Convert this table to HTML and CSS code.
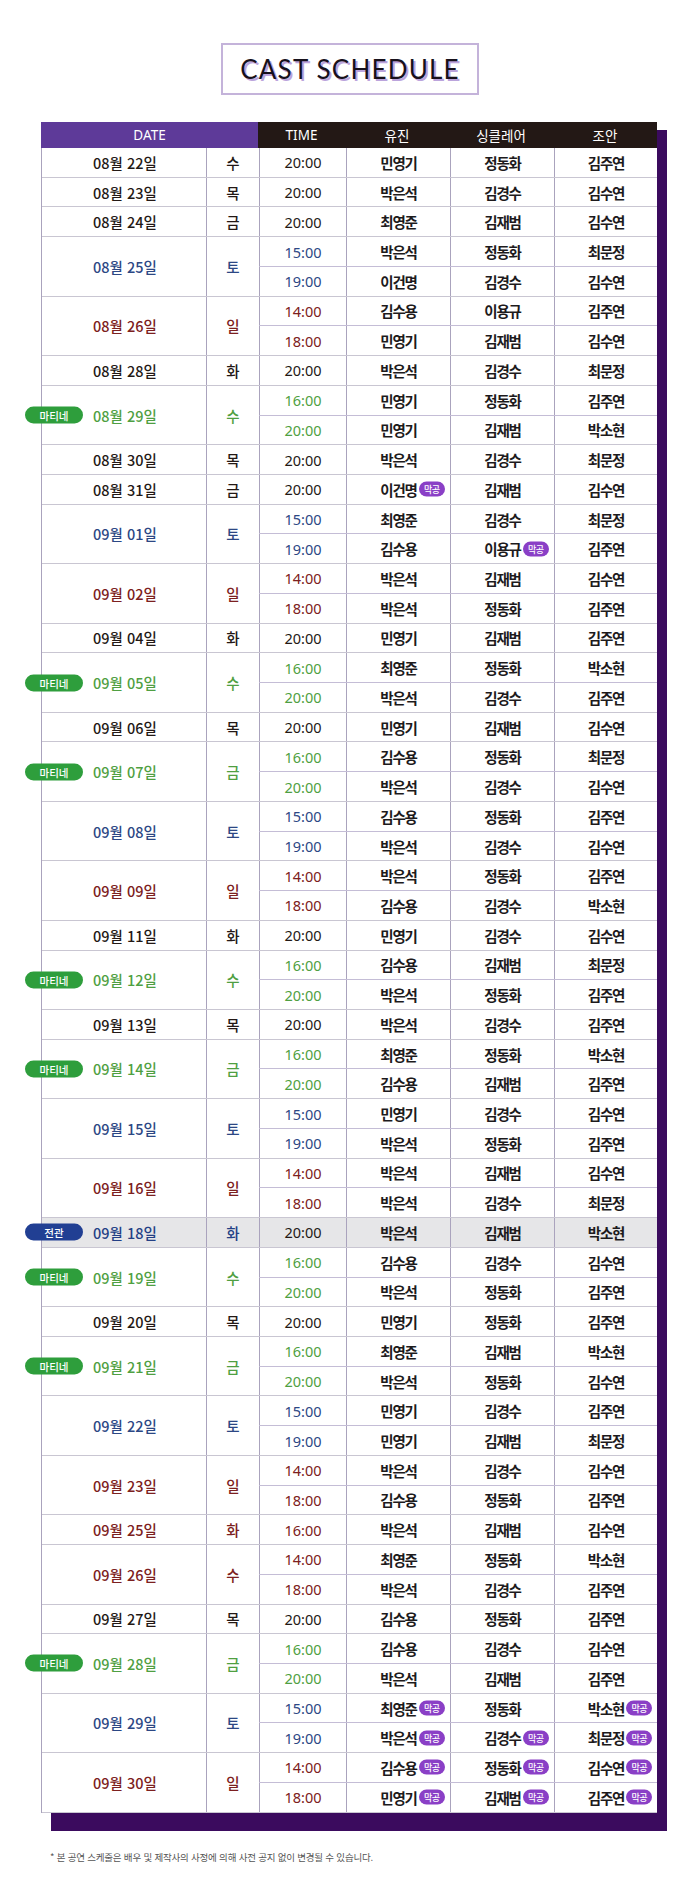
FILE: index.html
```html
<!DOCTYPE html>
<html lang="ko">
<head>
<meta charset="utf-8">
<title>Cast Schedule</title>
<link rel="stylesheet" href="styles.css">
</head>
<body>
<div class="page">
  <div class="title-wrap"><h1 class="title">CAST SCHEDULE</h1></div>

  <div class="sheet">
    <div class="head">
      <div class="h-date">DATE</div>
      <div class="h-rest">
        <div>TIME</div><div>유진</div><div>싱클레어</div><div>조안</div>
      </div>
    </div>

    <div class="g g1"><div class="d">08월 22일</div><div class="w">수</div><div class="slots"><div class="s"><span class="t">20:00</span><span class="n">민영기</span><span class="n">정동화</span><span class="n">김주연</span></div></div></div>
    <div class="g g1"><div class="d">08월 23일</div><div class="w">목</div><div class="slots"><div class="s"><span class="t">20:00</span><span class="n">박은석</span><span class="n">김경수</span><span class="n">김수연</span></div></div></div>
    <div class="g g1"><div class="d">08월 24일</div><div class="w">금</div><div class="slots"><div class="s"><span class="t">20:00</span><span class="n">최영준</span><span class="n">김재범</span><span class="n">김수연</span></div></div></div>
    <div class="g g2 blue"><div class="d">08월 25일</div><div class="w">토</div><div class="slots"><div class="s"><span class="t">15:00</span><span class="n">박은석</span><span class="n">정동화</span><span class="n">최문정</span></div><div class="s"><span class="t">19:00</span><span class="n">이건명</span><span class="n">김경수</span><span class="n">김수연</span></div></div></div>
    <div class="g g2 red"><div class="d">08월 26일</div><div class="w">일</div><div class="slots"><div class="s"><span class="t">14:00</span><span class="n">김수용</span><span class="n">이용규</span><span class="n">김주연</span></div><div class="s"><span class="t">18:00</span><span class="n">민영기</span><span class="n">김재범</span><span class="n">김수연</span></div></div></div>
    <div class="g g1"><div class="d">08월 28일</div><div class="w">화</div><div class="slots"><div class="s"><span class="t">20:00</span><span class="n">박은석</span><span class="n">김경수</span><span class="n">최문정</span></div></div></div>
    <div class="g g2 green"><div class="d"><span class="tag tag-mat">마티네</span>08월 29일</div><div class="w">수</div><div class="slots"><div class="s"><span class="t">16:00</span><span class="n">민영기</span><span class="n">정동화</span><span class="n">김주연</span></div><div class="s"><span class="t">20:00</span><span class="n">민영기</span><span class="n">김재범</span><span class="n">박소현</span></div></div></div>
    <div class="g g1"><div class="d">08월 30일</div><div class="w">목</div><div class="slots"><div class="s"><span class="t">20:00</span><span class="n">박은석</span><span class="n">김경수</span><span class="n">최문정</span></div></div></div>
    <div class="g g1"><div class="d">08월 31일</div><div class="w">금</div><div class="slots"><div class="s"><span class="t">20:00</span><span class="n"><span class="nm">이건명<i class="mk">막공</i></span></span><span class="n">김재범</span><span class="n">김수연</span></div></div></div>
    <div class="g g2 blue"><div class="d">09월 01일</div><div class="w">토</div><div class="slots"><div class="s"><span class="t">15:00</span><span class="n">최영준</span><span class="n">김경수</span><span class="n">최문정</span></div><div class="s"><span class="t">19:00</span><span class="n">김수용</span><span class="n"><span class="nm">이용규<i class="mk">막공</i></span></span><span class="n">김주연</span></div></div></div>
    <div class="g g2 red"><div class="d">09월 02일</div><div class="w">일</div><div class="slots"><div class="s"><span class="t">14:00</span><span class="n">박은석</span><span class="n">김재범</span><span class="n">김수연</span></div><div class="s"><span class="t">18:00</span><span class="n">박은석</span><span class="n">정동화</span><span class="n">김주연</span></div></div></div>
    <div class="g g1"><div class="d">09월 04일</div><div class="w">화</div><div class="slots"><div class="s"><span class="t">20:00</span><span class="n">민영기</span><span class="n">김재범</span><span class="n">김주연</span></div></div></div>
    <div class="g g2 green"><div class="d"><span class="tag tag-mat">마티네</span>09월 05일</div><div class="w">수</div><div class="slots"><div class="s"><span class="t">16:00</span><span class="n">최영준</span><span class="n">정동화</span><span class="n">박소현</span></div><div class="s"><span class="t">20:00</span><span class="n">박은석</span><span class="n">김경수</span><span class="n">김주연</span></div></div></div>
    <div class="g g1"><div class="d">09월 06일</div><div class="w">목</div><div class="slots"><div class="s"><span class="t">20:00</span><span class="n">민영기</span><span class="n">김재범</span><span class="n">김수연</span></div></div></div>
    <div class="g g2 green"><div class="d"><span class="tag tag-mat">마티네</span>09월 07일</div><div class="w">금</div><div class="slots"><div class="s"><span class="t">16:00</span><span class="n">김수용</span><span class="n">정동화</span><span class="n">최문정</span></div><div class="s"><span class="t">20:00</span><span class="n">박은석</span><span class="n">김경수</span><span class="n">김수연</span></div></div></div>
    <div class="g g2 blue"><div class="d">09월 08일</div><div class="w">토</div><div class="slots"><div class="s"><span class="t">15:00</span><span class="n">김수용</span><span class="n">정동화</span><span class="n">김주연</span></div><div class="s"><span class="t">19:00</span><span class="n">박은석</span><span class="n">김경수</span><span class="n">김수연</span></div></div></div>
    <div class="g g2 red"><div class="d">09월 09일</div><div class="w">일</div><div class="slots"><div class="s"><span class="t">14:00</span><span class="n">박은석</span><span class="n">정동화</span><span class="n">김주연</span></div><div class="s"><span class="t">18:00</span><span class="n">김수용</span><span class="n">김경수</span><span class="n">박소현</span></div></div></div>
    <div class="g g1"><div class="d">09월 11일</div><div class="w">화</div><div class="slots"><div class="s"><span class="t">20:00</span><span class="n">민영기</span><span class="n">김경수</span><span class="n">김수연</span></div></div></div>
    <div class="g g2 green"><div class="d"><span class="tag tag-mat">마티네</span>09월 12일</div><div class="w">수</div><div class="slots"><div class="s"><span class="t">16:00</span><span class="n">김수용</span><span class="n">김재범</span><span class="n">최문정</span></div><div class="s"><span class="t">20:00</span><span class="n">박은석</span><span class="n">정동화</span><span class="n">김주연</span></div></div></div>
    <div class="g g1"><div class="d">09월 13일</div><div class="w">목</div><div class="slots"><div class="s"><span class="t">20:00</span><span class="n">박은석</span><span class="n">김경수</span><span class="n">김주연</span></div></div></div>
    <div class="g g2 green"><div class="d"><span class="tag tag-mat">마티네</span>09월 14일</div><div class="w">금</div><div class="slots"><div class="s"><span class="t">16:00</span><span class="n">최영준</span><span class="n">정동화</span><span class="n">박소현</span></div><div class="s"><span class="t">20:00</span><span class="n">김수용</span><span class="n">김재범</span><span class="n">김주연</span></div></div></div>
    <div class="g g2 blue"><div class="d">09월 15일</div><div class="w">토</div><div class="slots"><div class="s"><span class="t">15:00</span><span class="n">민영기</span><span class="n">김경수</span><span class="n">김수연</span></div><div class="s"><span class="t">19:00</span><span class="n">박은석</span><span class="n">정동화</span><span class="n">김주연</span></div></div></div>
    <div class="g g2 red"><div class="d">09월 16일</div><div class="w">일</div><div class="slots"><div class="s"><span class="t">14:00</span><span class="n">박은석</span><span class="n">김재범</span><span class="n">김수연</span></div><div class="s"><span class="t">18:00</span><span class="n">박은석</span><span class="n">김경수</span><span class="n">최문정</span></div></div></div>
    <div class="g g1 full"><div class="d"><span class="tag tag-full">전관</span>09월 18일</div><div class="w">화</div><div class="slots"><div class="s"><span class="t">20:00</span><span class="n">박은석</span><span class="n">김재범</span><span class="n">박소현</span></div></div></div>
    <div class="g g2 green"><div class="d"><span class="tag tag-mat">마티네</span>09월 19일</div><div class="w">수</div><div class="slots"><div class="s"><span class="t">16:00</span><span class="n">김수용</span><span class="n">김경수</span><span class="n">김수연</span></div><div class="s"><span class="t">20:00</span><span class="n">박은석</span><span class="n">정동화</span><span class="n">김주연</span></div></div></div>
    <div class="g g1"><div class="d">09월 20일</div><div class="w">목</div><div class="slots"><div class="s"><span class="t">20:00</span><span class="n">민영기</span><span class="n">정동화</span><span class="n">김주연</span></div></div></div>
    <div class="g g2 green"><div class="d"><span class="tag tag-mat">마티네</span>09월 21일</div><div class="w">금</div><div class="slots"><div class="s"><span class="t">16:00</span><span class="n">최영준</span><span class="n">김재범</span><span class="n">박소현</span></div><div class="s"><span class="t">20:00</span><span class="n">박은석</span><span class="n">정동화</span><span class="n">김수연</span></div></div></div>
    <div class="g g2 blue"><div class="d">09월 22일</div><div class="w">토</div><div class="slots"><div class="s"><span class="t">15:00</span><span class="n">민영기</span><span class="n">김경수</span><span class="n">김주연</span></div><div class="s"><span class="t">19:00</span><span class="n">민영기</span><span class="n">김재범</span><span class="n">최문정</span></div></div></div>
    <div class="g g2 red"><div class="d">09월 23일</div><div class="w">일</div><div class="slots"><div class="s"><span class="t">14:00</span><span class="n">박은석</span><span class="n">김경수</span><span class="n">김수연</span></div><div class="s"><span class="t">18:00</span><span class="n">김수용</span><span class="n">정동화</span><span class="n">김주연</span></div></div></div>
    <div class="g g1 red"><div class="d">09월 25일</div><div class="w">화</div><div class="slots"><div class="s"><span class="t">16:00</span><span class="n">박은석</span><span class="n">김재범</span><span class="n">김수연</span></div></div></div>
    <div class="g g2 red"><div class="d">09월 26일</div><div class="w">수</div><div class="slots"><div class="s"><span class="t">14:00</span><span class="n">최영준</span><span class="n">정동화</span><span class="n">박소현</span></div><div class="s"><span class="t">18:00</span><span class="n">박은석</span><span class="n">김경수</span><span class="n">김주연</span></div></div></div>
    <div class="g g1"><div class="d">09월 27일</div><div class="w">목</div><div class="slots"><div class="s"><span class="t">20:00</span><span class="n">김수용</span><span class="n">정동화</span><span class="n">김주연</span></div></div></div>
    <div class="g g2 green"><div class="d"><span class="tag tag-mat">마티네</span>09월 28일</div><div class="w">금</div><div class="slots"><div class="s"><span class="t">16:00</span><span class="n">김수용</span><span class="n">김경수</span><span class="n">김수연</span></div><div class="s"><span class="t">20:00</span><span class="n">박은석</span><span class="n">김재범</span><span class="n">김주연</span></div></div></div>
    <div class="g g2 blue"><div class="d">09월 29일</div><div class="w">토</div><div class="slots"><div class="s"><span class="t">15:00</span><span class="n"><span class="nm">최영준<i class="mk">막공</i></span></span><span class="n">정동화</span><span class="n"><span class="nm">박소현<i class="mk">막공</i></span></span></div><div class="s"><span class="t">19:00</span><span class="n"><span class="nm">박은석<i class="mk">막공</i></span></span><span class="n"><span class="nm">김경수<i class="mk">막공</i></span></span><span class="n"><span class="nm">최문정<i class="mk">막공</i></span></span></div></div></div>
    <div class="g g2 red"><div class="d">09월 30일</div><div class="w">일</div><div class="slots"><div class="s"><span class="t">14:00</span><span class="n"><span class="nm">김수용<i class="mk">막공</i></span></span><span class="n"><span class="nm">정동화<i class="mk">막공</i></span></span><span class="n"><span class="nm">김수연<i class="mk">막공</i></span></span></div><div class="s"><span class="t">18:00</span><span class="n"><span class="nm">민영기<i class="mk">막공</i></span></span><span class="n"><span class="nm">김재범<i class="mk">막공</i></span></span><span class="n"><span class="nm">김주연<i class="mk">막공</i></span></span></div></div></div>
  </div>

  <p class="note">* 본 공연 스케줄은 배우 및 제작사의 사정에 의해 사전 공지 없이 변경될 수 있습니다.</p>
</div>
</body>
</html>
```

FILE: styles.css
```css
* { box-sizing: border-box; }

html, body {
  margin: 0;
  padding: 0;
  background: #ffffff;
}

body {
  font-family: "Noto Sans CJK KR", "Noto Sans", sans-serif;
  color: #231815;
}

.page {
  width: 700px;
  min-height: 1890px;
  padding-top: 43px;
}

.title-wrap {
  display: flex;
  justify-content: center;
}

.title {
  margin: 0;
  width: 258px;
  height: 52px;
  border: 2px solid #c4b3da;
  display: flex;
  align-items: center;
  justify-content: center;
  font-family: "Lato", "Liberation Sans", sans-serif;
  font-weight: 400;
  font-size: 26px;
  letter-spacing: 1.2px;
  color: #17111c;
  text-shadow: 2px 2px 0 #bba4dc;
}

.sheet {
  position: relative;
  z-index: 0;
  width: 616px;
  margin: 27px 0 0 41px;
  border-left: 1px solid #aaa3bd;
}

.sheet::before {
  content: "";
  position: absolute;
  top: 8px;
  left: 9px;
  right: -10px;
  bottom: -18px;
  background: #3b0b5e;
  z-index: -1;
}

.head {
  display: grid;
  grid-template-columns: 217px 1fr;
  height: 26px;
  color: #fff;
  font-family: "Noto Sans", "Noto Sans CJK KR", sans-serif;
  font-size: 13.5px;
  margin-left: -1px;
}

.h-date {
  background: #5e3a99;
  display: flex;
  align-items: center;
  justify-content: center;
}

.h-rest {
  background: #231815;
  display: grid;
  grid-template-columns: 87px 104px 104px 1fr;
}

.h-rest div {
  display: flex;
  align-items: center;
  justify-content: center;
}

.g {
  display: grid;
  grid-template-columns: 164px 53px 1fr;
  border-bottom: 1px solid #c9c6d2;
  background: #fff;
}

.g1 { height: 29.73px; }
.g2 { height: 59.46px; }

.d, .w {
  display: flex;
  align-items: center;
  justify-content: center;
  font-family: "Noto Sans CJK KR", "Noto Sans", sans-serif;
  font-size: 14.5px;
  font-weight: 500;
}

.d {
  position: relative;
  padding-left: 2px;
}

.w {
  border-left: 1px solid #aaa3bd;
}

.slots {
  display: flex;
  flex-direction: column;
}

.s {
  flex: 1;
  display: grid;
  grid-template-columns: 87px 104px 104px 1fr;
}

.s + .s {
  border-top: 1px solid #c4bdd6;
}

.t, .n {
  display: flex;
  align-items: center;
  justify-content: center;
  border-left: 1px solid #aaa3bd;
}

.t {
  font-family: "Noto Sans", sans-serif;
  font-size: 14.5px;
  font-weight: 400;
}

.n {
  font-size: 14.5px;
  font-weight: 700;
  letter-spacing: -1.2px;
  color: #1d1a1c;
}

.nm {
  position: relative;
}

.mk {
  position: absolute;
  left: calc(100% + 2px);
  top: 50%;
  transform: translateY(-50%);
  width: 26px;
  height: 15px;
  border-radius: 8px;
  background: #8a3fc6;
  color: #fff;
  font-style: normal;
  font-size: 9px;
  font-weight: 500;
  letter-spacing: -0.5px;
  display: flex;
  align-items: center;
  justify-content: center;
}

.tag {
  position: absolute;
  left: -17px;
  top: 50%;
  transform: translateY(-50%);
  width: 58px;
  height: 17px;
  border-radius: 9px;
  color: #fff;
  font-family: "Noto Sans CJK KR", sans-serif;
  font-size: 10.5px;
  font-weight: 500;
  display: flex;
  align-items: center;
  justify-content: center;
}

.tag-mat { background: #2e9e3c; }
.tag-full { background: #213f93; }

.blue .d, .blue .w, .blue .t { color: #2c4784; }
.red .d, .red .w, .red .t { color: #7c2020; }
.green .d, .green .w, .green .t { color: #4f9f42; }

.full { background: #e6e6e8; }
.full .d, .full .w { color: #233f85; }

.note {
  margin: 37px 0 0 50px;
  font-size: 9.5px;
  color: #555;
  letter-spacing: -0.2px;
}
```
